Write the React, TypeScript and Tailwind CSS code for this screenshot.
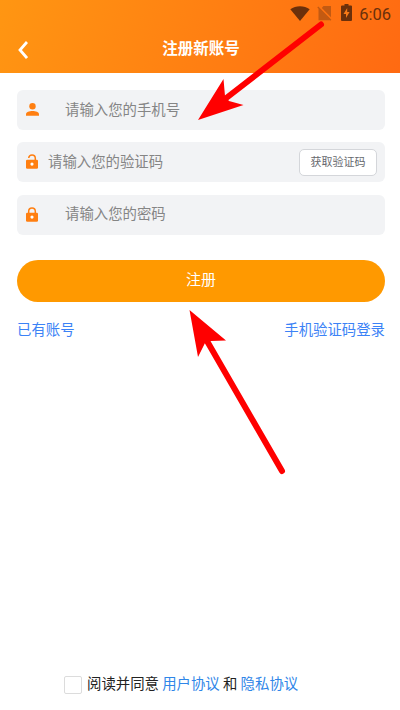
import type { ReactNode } from "react";

type FieldProps = {
  icon: ReactNode;
  placeholder: string;
  inputClass: string;
  children?: ReactNode;
};

const UserIcon = () => (
  <svg viewBox="0 0 13 13" className="mb-px h-[13px] w-[13px] shrink-0 fill-[#ff7f11]">
    <circle cx="6.5" cy="3.3" r="3.2" />
    <path d="M0 12.8v-1.6C0 9 3.3 8 6.5 8S13 9 13 11.2v1.6z" />
  </svg>
);

const LockIcon = ({ open = false }: { open?: boolean }) => (
  <svg viewBox="0 0 12 15" className="mr-[2px] mb-px h-[15px] w-[12px] shrink-0">
    <path
      d={open ? "M2.7 4C3 2 4.2 1 6 1s3.3 1.3 3.3 3.3V6.5" : "M2.7 6.5V4.3C2.7 2.3 4 1 6 1s3.3 1.3 3.3 3.3V6.5"}
      fill="none"
      stroke="#ff7f11"
      strokeWidth="1.5"
    />
    <rect y="5.8" width="12" height="8.9" rx="1.3" fill="#ff7f11" />
    <circle cx="6" cy="10.1" r="1.6" fill="#fff" />
  </svg>
);

const Field = ({ icon, placeholder, inputClass, children }: FieldProps) => (
  <div className="flex h-10 items-center rounded-md bg-[#f2f3f5] pr-2 pl-[9px]">
    {icon}
    <input
      className={`h-full min-w-0 flex-1 bg-transparent text-[14.4px] outline-none placeholder:text-[#858585] ${inputClass}`}
      placeholder={placeholder}
    />
    {children}
  </div>
);

const StatusBar = () => (
  <div className="flex h-[27px] items-center justify-end pr-[9px] text-[#6b300b]">
    <svg viewBox="0 0 20 15" className="mb-px h-[15px] w-[20px] fill-current">
      <path d="M10 15 .3 3.3C5.8-.9 14.2-.9 19.7 3.3z" />
    </svg>
    <svg viewBox="0 0 15 15" className="ml-[7px] h-[15px] w-[15px] fill-[#c35a12]">
      <path d="M6.5 0H14v11.2L4.8 2z" />
      <path d="M.3 1.6 1.3.6 14.400 13.700l-1 1-.4-.4H1.500V2.800z" />
    </svg>
    <svg viewBox="0 0 11 17" className="mb-[2px] ml-[9px] h-[17px] w-[11px]">
      <path d="M3.5 0h4v1.5H10a1 1 0 0 1 1 1V16a1 1 0 0 1-1 1H1a1 1 0 0 1-1-1V2.5a1 1 0 0 1 1-1h2.5z" fill="#6b300b" />
      <path d="M6.2 4 2.5 10H5v4l3.6-6H6.2z" fill="#f77a18" />
    </svg>
    <span className="mt-[3px] ml-[7px] font-[Roboto] text-[16.5px] leading-none">6:06</span>
  </div>
);

export default function App() {
  return (
    <div className="relative flex h-[710px] w-[400px] flex-col overflow-hidden bg-white font-['Noto_Sans_CJK_SC',sans-serif]">
      <header className="h-[73px] bg-[linear-gradient(110deg,#ff9612,#ff6a12)]">
        <StatusBar />
        <div className="grid h-[42px] grid-cols-[1fr_auto_1fr] items-center pr-[16px] pl-[18px] text-white">
          <svg viewBox="0 0 10 18" className="mt-[3px] h-[18px] w-[10px]" fill="none" stroke="currentColor" strokeWidth="2.8">
            <path d="M9 1 2 9l7 8" />
          </svg>
          <h1 className="text-[15.5px] font-bold">注册新账号</h1>
        </div>
      </header>

      <form className="flex flex-col gap-3 pt-[17px] pr-[15px] pl-[17px]">
        <Field icon={<UserIcon />} placeholder="请输入您的手机号" inputClass="pb-[3px] pl-[26px]" />
        <Field icon={<LockIcon open />} placeholder="请输入您的验证码" inputClass="pb-[3px] pl-[8px]">
          <button type="button" className="h-[27px] w-[78px] rounded-[5px] border border-[#d4d6da] bg-white pb-px text-[11px] text-[#66686d]">
            获取验证码
          </button>
        </Field>
        <div className="pt-px">
          <Field icon={<LockIcon />} placeholder="请输入您的密码" inputClass="pb-[5px] pl-[25px]" />
        </div>
        <button type="button" className="mt-[13px] h-[42px] rounded-full bg-[#ff9900] pb-[3px] text-[15px] text-white">
          注册
        </button>
      </form>

      <div className="mt-[17px] flex justify-between pr-[15px] pl-[17px] text-[14.4px] leading-5 text-[#3b82f6]">
        <a>已有账号</a>
        <a>手机验证码登录</a>
      </div>

      <footer className="mt-auto mb-[15px] flex items-center pl-16 text-[14.4px] leading-5 text-[#222]">
        <span className="mt-[2px] mr-[5px] h-[18px] w-[18px] rounded-xs border border-[#dcdcdc]" />
        <p className="pb-[2px]">
          阅读并同意 <a className="text-[#2f86e8]">用户协议</a> 和 <a className="text-[#2f86e8]">隐私协议</a>
        </p>
      </footer>

      <svg viewBox="0 0 400 710" className="pointer-events-none absolute inset-0 h-full w-full" fill="#ff0000">
        <path d="M321 24.5 225 99M282 471 207 341" stroke="#ff0000" strokeWidth="6" strokeLinecap="round" />
        <path d="M198 120 223.5 79 225 96 229 101 243.5 105zM189.5 310 226 340.5 211 341 205 343 198 357z" />
      </svg>
    </div>
  );
}
